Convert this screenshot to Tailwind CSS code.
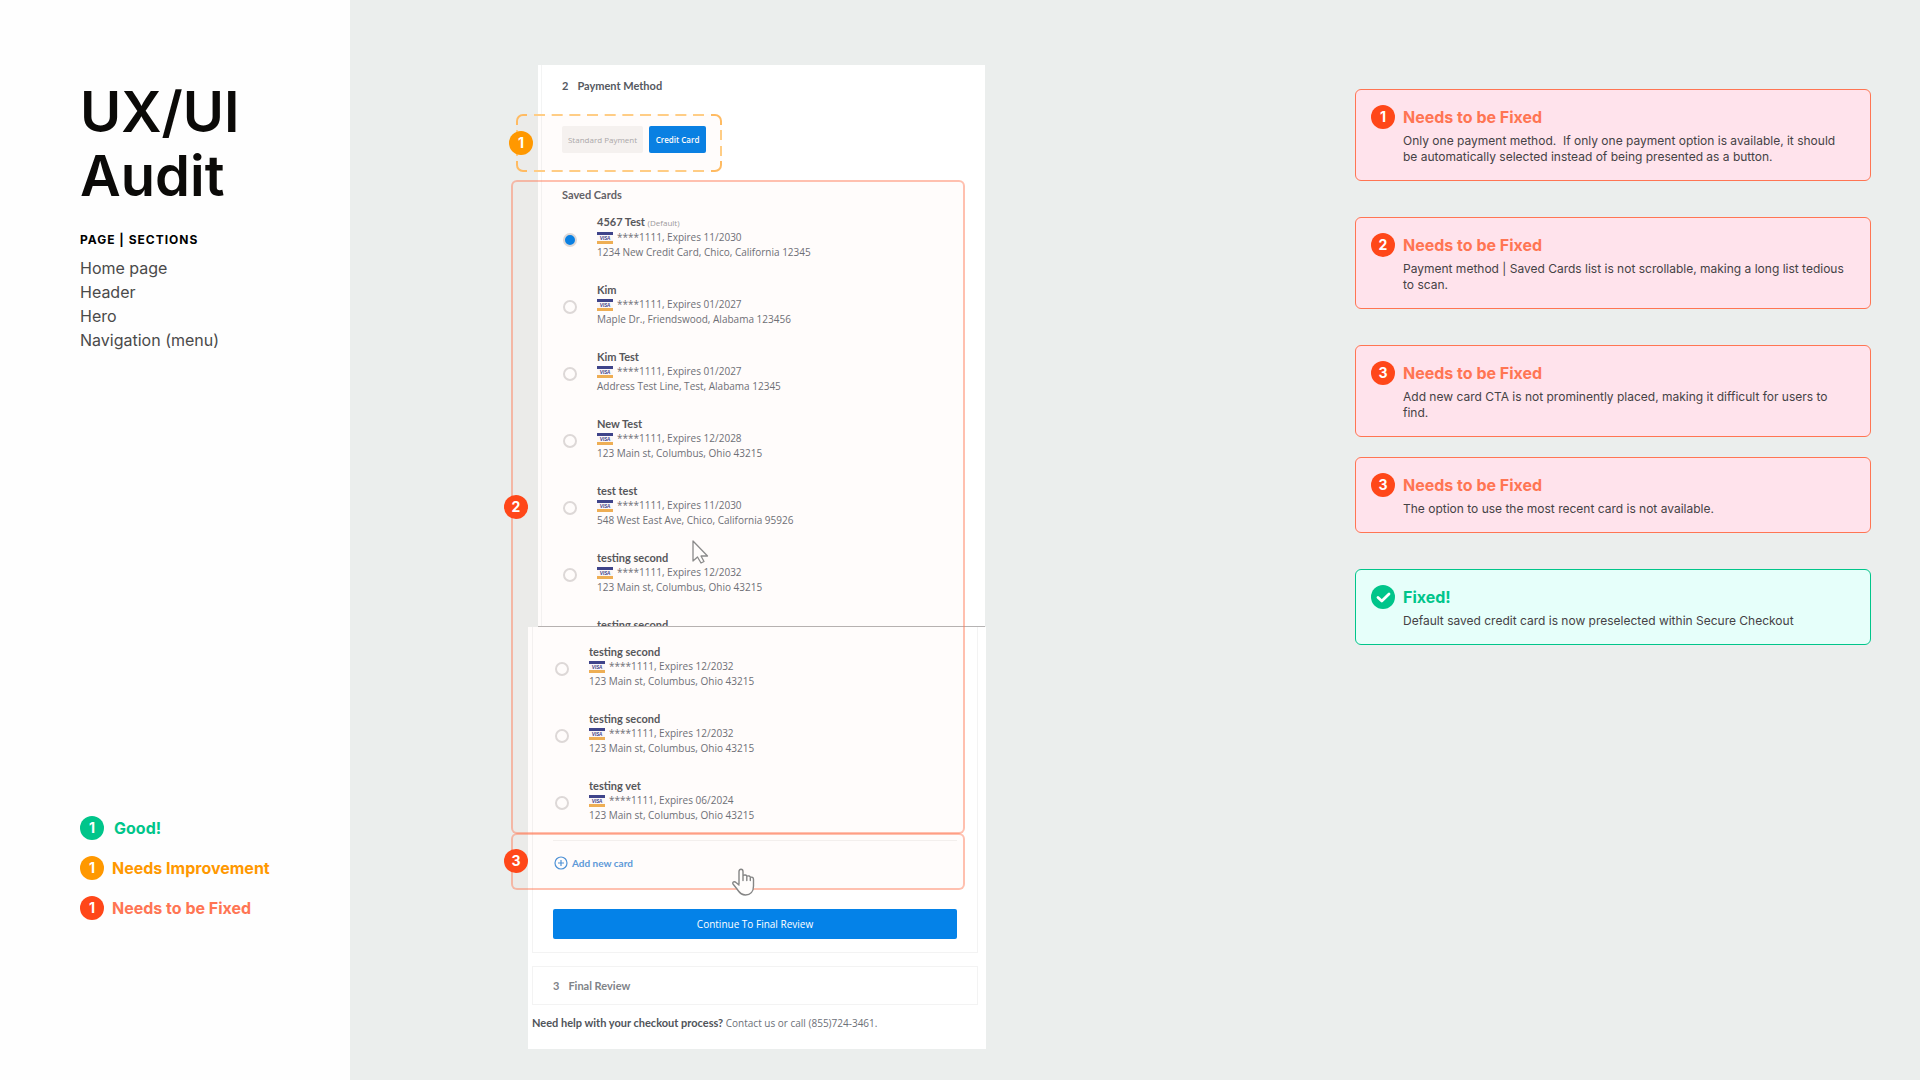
<!DOCTYPE html>
<html lang="en">
<head>
    <meta charset="UTF-8">
    <meta name="viewport" content="width=device-width, initial-scale=1.0">
    <title>UX/UI Audit - Payment Method</title>
    <script src="https://cdn.jsdelivr.net/npm/@tailwindcss/browser@4"></script>
</head>
<body class="min-h-screen bg-[#ebeeed] font-['Inter',sans-serif]">
    <svg class="hidden">
        <symbol id="visa" viewBox="0 0 16 12">
            <rect width="16" height="3" fill="#3c448c"/>
            <rect y="3" width="16" height="6" fill="#fbfafc"/>
            <text x="8" y="8" text-anchor="middle" font-family="Lato, sans-serif" font-size="5" font-weight="900" font-style="italic" fill="#3c448c">VISA</text>
            <rect y="9" width="16" height="3" fill="#eeb055"/>
        </symbol>
    </svg>

    <div class="flex min-h-screen">
        <!-- Sidebar -->
        <aside class="flex w-[350px] shrink-0 flex-col justify-between bg-[#fefefe] pt-20 pb-40 pl-20">
            <div>
                <h1 class="w-40 text-[56px] leading-16 font-semibold text-[#0b0a08]">UX/UI Audit</h1>
                <h2 class="mt-6 text-xs font-bold tracking-[1px] text-black">PAGE | SECTIONS</h2>
                <ul class="mt-2 text-base text-[#4a4a4a]">
                    <li>Home page</li>
                    <li>Header</li>
                    <li>Hero</li>
                    <li>Navigation (menu)</li>
                </ul>
            </div>
            <ul class="flex flex-col gap-4 font-bold">
                <li class="flex items-center gap-[10px] text-[#00c58a]">
                    <span class="flex size-6 items-center justify-center rounded-full bg-[#00c58a] text-sm text-white">1</span>Good!
                </li>
                <li class="flex items-center gap-2 text-[#ff9800]">
                    <span class="flex size-6 items-center justify-center rounded-full bg-[#ff9800] text-sm text-white">1</span>Needs Improvement
                </li>
                <li class="flex items-center gap-2 text-[#ff7553]">
                    <span class="flex size-6 items-center justify-center rounded-full bg-[#ff4719] text-sm text-white">1</span>Needs to be Fixed
                </li>
            </ul>
        </aside>

        <!-- Audited screen -->
        <main class="flex-1 pt-[65px] pl-[161px]">
            <div class="relative w-[475px] font-['Open_Sans',sans-serif] text-[10px] leading-[15px] text-[#6c7078]">
                <section class="ml-[27px] h-[562px] w-[447px] overflow-hidden border-b border-[#b5b3b3] bg-white">
                    <div class="ml-[3px] border-l border-[#f3f4f4] pt-[11px] pl-5">
                        <h3 class="flex gap-[9px] font-['Lato',sans-serif] text-[11px] leading-5 font-bold text-[#55595f]"><span>2</span>Payment Method</h3>
                        <div class="mt-[30px] flex gap-[6px]">
                            <button class="h-[27px] w-[81px] rounded-xs bg-[#f5f4f3] text-[8px] text-[#a9a9ab]">Standard Payment</button>
                            <button class="h-[27px] w-[57px] rounded-xs bg-[#0681e6] text-[8px] font-semibold text-white">Credit Card</button>
                        </div>
                        <h4 class="mt-8 font-['Lato',sans-serif] text-[11px] leading-5 font-bold text-[#5f6268]">Saved Cards</h4>
                        <div id="cardsTop" class="mt-[9px] flex flex-col gap-[22px]"></div>
                    </div>
                </section>

                <section class="ml-[17px] w-[458px] bg-white pb-4 pl-1">
                    <div class="w-[446px] border border-t-0 border-[#f3f3f3] px-5 pt-[17px] pb-[13px]">
                        <div id="cardsBottom" class="flex flex-col gap-[22px] pl-px"></div>
                        <hr class="mt-[17px] border-[#f3f2f1]">
                        <a href="#" class="mt-3 flex h-5 items-center gap-1 pl-px font-['Lato',sans-serif] font-bold text-[#5b9bdc]">
                            <svg class="size-[14px]" viewBox="0 0 14 14" fill="none" stroke="#4b93d9" stroke-width="1.2">
                                <circle cx="7" cy="7" r="6"/>
                                <path d="M7 4v6M4 7h6"/>
                            </svg>
                            Add new card
                        </a>
                        <button class="mt-9 h-[30px] w-full rounded-xs bg-[#0482e8] text-white">Continue To Final Review</button>
                    </div>
                    <div class="mt-[13px] flex h-[39px] w-[446px] items-center gap-[9px] border border-[#f3f3f3] pl-5 font-['Lato',sans-serif] text-[11px] font-bold text-[#808388]">
                        <span>3</span>Final Review
                    </div>
                    <p class="mt-2 leading-5"><b class="font-['Lato',sans-serif] text-[11px] text-[#50545a]">Need help with your checkout process?</b> Contact us or call (855)724-3461.</p>
                </section>

                <!-- Annotation 1 -->
                <div class="absolute top-[49px] left-[5px] h-[58px] w-[206px] rounded-md bg-[#ff7a20]/2">
                    <svg class="size-full" viewBox="0 0 206 58" fill="none" stroke="#ffcd85" stroke-width="2">
                        <path d="M18 1h170M18 57h170" stroke-dasharray="11 6.67"/>
                        <path d="M1 16v26M205 16v26" stroke-dasharray="10 6"/>
                        <path stroke="#ffbb62" d="M1 11V7a6 6 0 0 1 6-6h4M195 1h4a6 6 0 0 1 6 6v4M205 47v4a6 6 0 0 1-6 6h-4M11 57H7a6 6 0 0 1-6-6v-4"/>
                    </svg>
                    <span class="absolute top-[17px] -left-[7px] flex size-6 items-center justify-center rounded-full bg-[#ff9800] font-['Inter',sans-serif] text-sm font-bold text-white">1</span>
                </div>
                <!-- Annotation 2 -->
                <div class="absolute top-[115px] left-0 h-[654px] w-[454px] rounded-md border-2 border-[#ff7553]/45 bg-[#ff6a20]/2">
                    <span class="absolute top-[313px] -left-[9px] flex size-6 items-center justify-center rounded-full bg-[#ff4719] font-['Inter',sans-serif] text-sm font-bold text-white">2</span>
                </div>
                <!-- Annotation 3 -->
                <div class="absolute top-[768px] left-0 h-[57px] w-[454px] rounded-md border-2 border-[#ff7553]/45 bg-[#ff6a20]/2">
                    <span class="absolute top-[14px] -left-[9px] flex size-6 items-center justify-center rounded-full bg-[#ff4719] font-['Inter',sans-serif] text-sm font-bold text-white">3</span>
                </div>

                <!-- Mouse pointers -->
                <svg class="absolute top-[475px] left-[181px] h-[24px] w-[17px]" viewBox="0 0 17 24" fill="#fffdfc" stroke="#8b8b8b" stroke-width="1.3" stroke-linejoin="round">
                    <path d="M1 1v20l4.500-4 3.500 6 3-1.500-3-5.500h6.500z"/>
                </svg>
                <svg class="absolute top-[803px] left-[220px] h-[28px] w-[24px]" viewBox="0 0 24 28" fill="#fffdfc" stroke="#858585" stroke-width="1.4" stroke-linejoin="round" stroke-linecap="round">
                    <path d="M8 16V3.500C8 .5 12 .5 12 3.500V7.500C13.500 6.500 15.500 7 15.800 8.200C17.500 7.500 19 8 19.300 9.200C21 8.800 22.500 9.500 22.500 11.500V18C22.500 23.500 19.500 27 14.500 27C9.500 27 8 24 6 21L2 16C1 14 3.500 13 5 14.500L8 17M12 7.500V12.500M15.800 8.500V12.500M19.300 9.500V12.500"/>
                </svg>
            </div>
        </main>

        <!-- Notes -->
        <aside class="mt-[89px] mr-[49px] flex w-[516px] shrink-0 flex-col gap-9 text-xs text-[#454245]">
            <article class="flex gap-2 rounded-md border border-[#ff7553] bg-[#ffe3ec] py-[15px] pr-5 pl-[15px]">
                <span class="flex size-6 shrink-0 items-center justify-center rounded-full bg-[#ff4719] text-sm font-bold text-white">1</span>
                <div>
                    <h3 class="text-base font-bold text-[#ff7553]">Needs to be Fixed</h3>
                    <p class="mt-1">Only one payment method.&nbsp; If only one payment option is available, it should be automatically selected instead of being presented as a button.</p>
                </div>
            </article>
            <article class="flex gap-2 rounded-md border border-[#ff7553] bg-[#ffe3ec] py-[15px] pr-5 pl-[15px]">
                <span class="flex size-6 shrink-0 items-center justify-center rounded-full bg-[#ff4719] text-sm font-bold text-white">2</span>
                <div>
                    <h3 class="text-base font-bold text-[#ff7553]">Needs to be Fixed</h3>
                    <p class="mt-1">Payment method | Saved Cards list is not scrollable, making a long list tedious to scan.</p>
                </div>
            </article>
            <div class="flex flex-col gap-5">
                <article class="flex gap-2 rounded-md border border-[#ff7553] bg-[#ffe3ec] py-[15px] pr-5 pl-[15px]">
                    <span class="flex size-6 shrink-0 items-center justify-center rounded-full bg-[#ff4719] text-sm font-bold text-white">3</span>
                    <div>
                        <h3 class="text-base font-bold text-[#ff7553]">Needs to be Fixed</h3>
                        <p class="mt-1">Add new card CTA is not prominently placed, making it difficult for users to find.</p>
                    </div>
                </article>
                <article class="flex gap-2 rounded-md border border-[#ff7553] bg-[#ffe3ec] py-[15px] pr-5 pl-[15px]">
                    <span class="flex size-6 shrink-0 items-center justify-center rounded-full bg-[#ff4719] text-sm font-bold text-white">3</span>
                    <div>
                        <h3 class="text-base font-bold text-[#ff7553]">Needs to be Fixed</h3>
                        <p class="mt-1">The option to use the most recent card is not available.</p>
                    </div>
                </article>
            </div>
            <article class="flex gap-2 rounded-md border border-[#00c58a] bg-[#e6fffa] py-[15px] pr-5 pl-[15px]">
                <svg class="size-6 shrink-0" viewBox="0 0 24 24" fill="none">
                    <circle cx="12" cy="12" r="12" fill="#00c58a"/>
                    <path d="M7 12.500l3.800 3.500L18 9" stroke="#fff" stroke-width="2.8" stroke-linecap="round" stroke-linejoin="round"/>
                </svg>
                <div>
                    <h3 class="text-base font-bold text-[#00c58a]">Fixed!</h3>
                    <p class="mt-1">Default saved credit card is now preselected within Secure Checkout</p>
                </div>
            </article>
        </aside>
    </div>

    <script>
        // name, expiry, address, default card
        const topCards = [
            ['4567 Test', '11/2030', '1234 New Credit Card, Chico, California 12345', true],
            ['Kim', '01/2027', 'Maple Dr., Friendswood, Alabama 123456'],
            ['Kim Test', '01/2027', 'Address Test Line, Test, Alabama 12345'],
            ['New Test', '12/2028', '123 Main st, Columbus, Ohio 43215'],
            ['test test', '11/2030', '548 West East Ave, Chico, California 95926'],
            ['testing second', '12/2032', '123 Main st, Columbus, Ohio 43215'],
            ['testing second']
        ];
        const bottomCards = [
            ['testing second', '12/2032', '123 Main st, Columbus, Ohio 43215'],
            ['testing second', '12/2032', '123 Main st, Columbus, Ohio 43215'],
            ['testing vet', '06/2024', '123 Main st, Columbus, Ohio 43215']
        ];

        function renderCards(id, cards) {
            document.getElementById(id).innerHTML = cards.map(([name, expires, address, isDefault]) => {
                // the last card of the top part only shows the upper half of its name
                if (!expires) {
                    return `<p class="pl-[35px] font-['Lato',sans-serif] text-[11px] font-bold text-[#54575c]">${name}</p>`;
                }
                return `
                <label class="flex items-center gap-5">
                    <input type="radio" name="card" ${isDefault ? 'checked' : ''} class="mt-[5px] ml-px size-[14px] shrink-0 appearance-none rounded-full border-2 border-[#dddbdb] bg-white checked:bg-[#0681e6]">
                    <span class="block">
                        <span class="block font-['Lato',sans-serif] text-[11px] font-bold text-[#54575c]">${name}${isDefault ? ` <small class="font-['Open_Sans',sans-serif] text-[8px] font-normal text-[#9a9a9e]">(Default)</small>` : ''}</span>
                        <span class="flex items-center gap-1"><svg class="h-3 w-4"><use href="#visa"/></svg>****1111, Expires ${expires}</span>
                        <span class="block">${address}</span>
                    </span>
                </label>`;
            }).join('');
        }

        renderCards('cardsTop', topCards);
        renderCards('cardsBottom', bottomCards);
    </script>
</body>
</html>
